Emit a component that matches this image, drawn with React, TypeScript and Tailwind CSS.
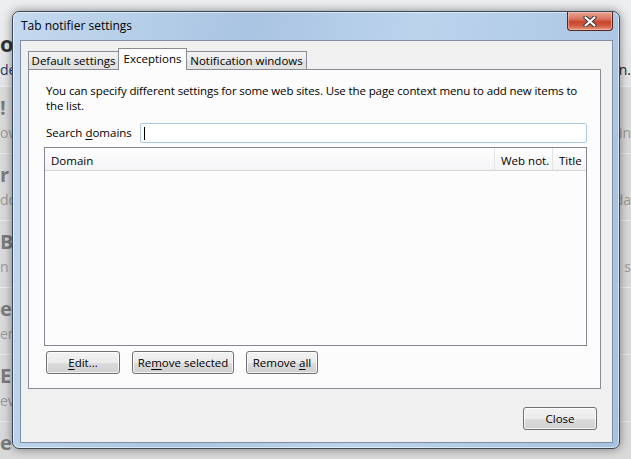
import React from "react";

const rows = [
  { title: "!", sub: "ow", right: "in" },
  { title: "r", sub: "dd", right: "da" },
  { title: "Bi", sub: "n", right: "s" },
  { title: "e", sub: "en", right: "" },
  { title: "E", sub: "evi", right: "" },
  { title: "e", sub: "", right: "" },
];

function BackgroundPage() {
  return (
    <div className="flex flex-col font-['Open_Sans',sans-serif]">
      <div className="h-[86px] bg-[linear-gradient(#eceef0,#e2e3e5)] flex flex-col">
        <div className="mt-[31px] h-[24px] flex items-center text-[22px] font-bold text-[#333] leading-none">
          o
        </div>
        <div className="mt-[3px] h-[24px] flex justify-between items-center text-[14px] leading-none">
          <span className="text-[#1d3b6a]">de</span>
          <span className="text-[#222]">n.</span>
        </div>
      </div>
      {rows.map((r, i) => (
        <div
          key={i}
          className="h-[67px] border-t border-[#ebebeb] bg-[#d9d9da] flex flex-col"
        >
          <div className="mt-[9px] h-[24px] flex items-center text-[20px] font-bold text-[#7b7b7b] leading-none">
            {r.title}
          </div>
          <div className="mt-[4px] h-[18px] flex justify-between items-center text-[14px] text-[#9a9a9a] leading-none">
            <span>{r.sub}</span>
            <span>{r.right}</span>
          </div>
        </div>
      ))}
    </div>
  );
}

function Btn({
  children,
  className,
}: {
  children: React.ReactNode;
  className: string;
}) {
  return (
    <div
      className={
        "h-[23px] flex items-center justify-center rounded-[3px] border border-[#707070] bg-[linear-gradient(#f2f2f2_0%,#ebebeb_50%,#dddddd_51%,#cfcfcf_100%)] shadow-[inset_0_0_0_1px_rgba(255,255,255,0.75)] text-black " +
        className
      }
    >
      {children}
    </div>
  );
}

function Tab({ label, active, w }: { label: string; active?: boolean; w: string }) {
  if (active) {
    return (
      <div
        className={
          "relative z-10 -ml-px h-[22px] border border-b-0 border-[#898c95] bg-[#fcfcfc] flex items-start justify-center pt-[1px] " +
          w
        }
      >
        {label}
      </div>
    );
  }
  return (
    <div
      className={
        "-ml-px first:ml-0 mb-px h-[18px] border border-b-0 border-[#898c95] bg-[linear-gradient(#f3f3f3_0%,#ebebeb_50%,#dedede_51%,#e3e3e3_100%)] flex items-center justify-center " +
        w
      }
    >
      {label}
    </div>
  );
}

function CloseGlyph() {
  return (
    <svg width="14" height="11" viewBox="0 0 14 11">
      <path d="M2.5 1.5 L11.5 9.5 M11.5 1.5 L2.5 9.5" stroke="#3b3b3b" strokeWidth="4.2" strokeLinecap="round" />
      <path d="M2.5 1.5 L11.5 9.5 M11.5 1.5 L2.5 9.5" stroke="#ffffff" strokeWidth="2.2" strokeLinecap="round" />
    </svg>
  );
}

export default function App() {
  return (
    <div className="relative w-[631px] h-[459px] overflow-hidden bg-[#dcdddf]">
      <BackgroundPage />

      {/* dialog window over the page */}
      <div className="absolute left-[12px] top-[11px] w-[608px] h-[438px] rounded-[7px] border border-[#3c4858] bg-[linear-gradient(100deg,#c4d9ee_0%,#a9c4e2_35%,#bcd3ec_60%,#a6c2e1_100%)] shadow-[0_0_10px_rgba(0,0,0,0.45),inset_0_0_0_1px_rgba(255,255,255,0.55)] flex flex-col font-['Open_Sans',sans-serif] text-[11.5px] text-black">
        <div className="h-[28px] flex justify-between">
          <div className="pl-[8px] self-center text-[12px]">Tab notifier settings</div>
          <div className="mr-[6px] w-[46px] h-[19px] rounded-b-[4px] border border-t-0 border-[#58241c] bg-[linear-gradient(#eba898_0%,#d9725e_40%,#c7452f_55%,#d2583f_75%,#e49a80_100%)] shadow-[inset_0_0_0_1px_rgba(255,210,200,0.5)] flex items-center justify-center">
            <CloseGlyph />
          </div>
        </div>

        {/* client area */}
        <div className="ml-[7px] mr-[6px] mb-[5px] flex-1 border border-[#7f8fa3] bg-[#f0f0f0] flex flex-col pl-[7px] pr-[11px] pt-[7px]">
          <div className="flex items-end -mb-px relative z-10 h-[22px]">
            <Tab label="Default settings" w="w-[91px]" />
            <Tab label="Exceptions" w="w-[69px]" active />
            <Tab label="Notification windows" w="w-[121px]" />
          </div>

          <div className="h-[320px] border border-[#898c95] bg-[#fcfcfc] flex flex-col pl-[15px] pr-[13px] pt-[13px]">
            <p className="pl-[2px] leading-[15px] tracking-[-0.12px]">
              You can specify different settings for some web sites. Use the page context menu to add new items to the list.
            </p>

            <div className="mt-[10px] h-[20px] flex items-center">
              <div className="w-[96px] pl-[2px]">
                Search <span className="underline underline-offset-2">d</span>omains
              </div>
              <div className="flex-1 h-[20px] rounded-[2px] border border-[#a9cbe7] bg-white flex items-center pl-[3px]">
                <div className="w-px h-[13px] bg-black" />
              </div>
            </div>

            <div className="mt-[4px] h-[199px] border border-[#828790] bg-[#fcfcfc] flex flex-col">
              <div className="h-[23px] border-b border-[#d5d5d5] bg-[linear-gradient(#ffffff,#f3f4f6)] flex">
                <div className="flex-1 flex items-center pl-[6px] pt-[3px]">Domain</div>
                <div className="w-[58px] border-l border-[#dfe2e6] flex items-center pl-[6px] pt-[3px]">Web not.</div>
                <div className="w-[34px] border-l border-[#dfe2e6] flex items-center pl-[6px] pt-[3px]">Title</div>
              </div>
            </div>

            <div className="mt-[5px] flex gap-[12px] pl-[2px]">
              <Btn className="w-[74px]">
                <span>
                  <span className="underline underline-offset-2">E</span>dit...
                </span>
              </Btn>
              <Btn className="w-[102px]">
                <span>
                  Re<span className="underline underline-offset-2">m</span>ove selected
                </span>
              </Btn>
              <Btn className="w-[72px]">
                <span>
                  Remove <span className="underline underline-offset-2">a</span>ll
                </span>
              </Btn>
            </div>
          </div>

          <div className="mt-[18px] flex justify-end pr-[4px]">
            <Btn className="w-[74px]">Close</Btn>
          </div>
        </div>
      </div>
    </div>
  );
}
